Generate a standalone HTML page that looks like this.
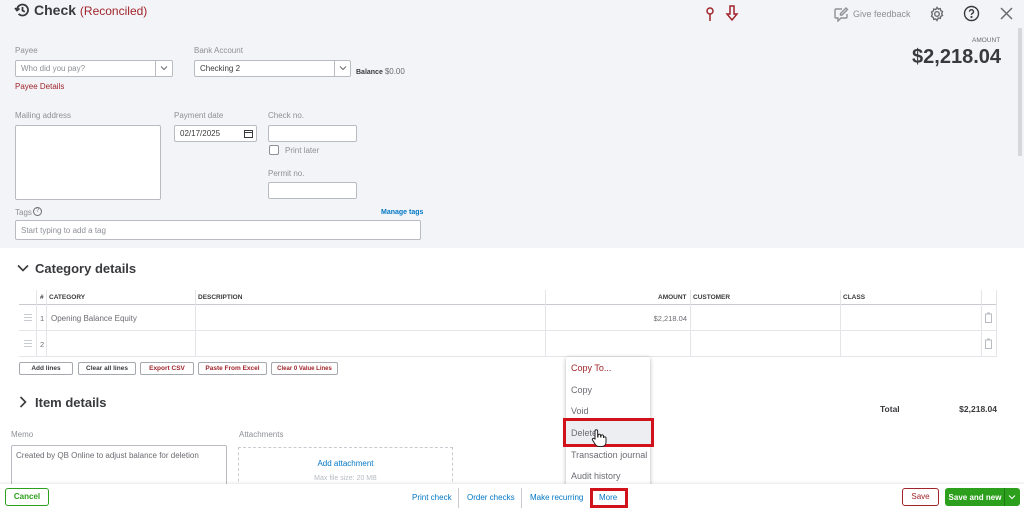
<!DOCTYPE html><html><head><style>
*{box-sizing:border-box;margin:0;padding:0}
body{width:1024px;height:516px;overflow:hidden;font-family:"Liberation Sans",sans-serif;background:#fff;position:relative;color:#393a3d}
.a{position:absolute}
.top{left:0;top:0;width:1024px;height:248px;background:#f3f4f7}
.lbl{font-size:8px;color:#8d9096}
.in{background:#fff;border:1px solid #b8bcc2;border-radius:2px;font-size:8px;color:#8d9096;padding-left:5px;display:flex;align-items:center}
.btn{border:1px solid #a5a8ad;border-radius:2px;font-size:6.5px;font-weight:bold;display:flex;align-items:center;justify-content:center;background:#fff;height:13px;top:362px;white-space:nowrap}
.hd{font-size:6.5px;font-weight:bold;color:#393a3d}
.vl{width:1px;background:#e3e5e8}
.hl{height:1px;background:#e3e5e8}
.mi{font-size:9px;color:#6b6c72;left:571px}
.lk{font-size:8px;color:#0077c5;top:493px}
</style></head><body>
<div class="a top"></div>
<svg class="a" style="left:14px;top:2px" width="16" height="16" viewBox="0 0 16 16" fill="none" stroke="#393a3d" stroke-width="1.8"><path d="M3 8a5.5 5.5 0 1 1 1.6 3.9"/><path d="M1 6l2 2.5 2.5-2"/><path d="M8.5 5v3.5l2.3 1.3"/></svg>
<div class="a" style="left:34px;top:2px;font-size:14px;font-weight:bold">Check <span style="font-weight:normal;color:#a0252b;font-size:12px">(Reconciled)</span></div>
<svg class="a" style="left:703px;top:6px" width="14" height="16" viewBox="0 0 14 16" fill="none" stroke="#a0252b" stroke-width="1.5"><circle cx="7" cy="5" r="3"/><path d="M7 8v7"/></svg>
<svg class="a" style="left:725px;top:5px" width="14" height="17" viewBox="0 0 14 17" fill="none" stroke="#a0252b" stroke-width="1.5"><path d="M5 1h4v8h3l-5 6-5-6h3z"/></svg>
<svg class="a" style="left:833px;top:6px" width="16" height="16" viewBox="0 0 16 16" fill="none" stroke="#8d9096" stroke-width="1.4"><path d="M9 3H3a1 1 0 0 0-1 1v7a1 1 0 0 0 1 1h2v3l3-3h5a1 1 0 0 0 1-1V8"/><path d="M13 2l1.5 1.5L9 9H7.5V7.5z"/></svg>
<div class="a" style="left:853px;top:9px;font-size:9px;color:#8d9096">Give feedback</div>
<svg class="a" style="left:929px;top:6px" width="16" height="16" viewBox="0 0 16 16" fill="none" stroke="#6b6c72" stroke-width="1.4"><circle cx="8" cy="8" r="2.3"/><path d="M8 1.5l1.3 1.6 2-.5.4 2 1.8 1-.8 1.9.8 1.9-1.8 1-.4 2-2-.5L8 14.5l-1.3-1.6-2 .5-.4-2-1.8-1L3.3 8l-.8-1.9 1.8-1 .4-2 2 .5z"/></svg>
<svg class="a" style="left:963px;top:5px" width="17" height="17" viewBox="0 0 17 17" fill="none" stroke="#393a3d" stroke-width="1.4"><circle cx="8.5" cy="8.5" r="7"/><path d="M6.5 6.7a2 2 0 1 1 2.5 1.9c-.5.2-.5.6-.5 1.3"/><circle cx="8.5" cy="12" r=".4" fill="#393a3d"/></svg>
<svg class="a" style="left:1000px;top:7px" width="13" height="13" viewBox="0 0 13 13" stroke="#6b6c72" stroke-width="1.5"><path d="M1 1l11 11M12 1L1 12"/></svg>
<div class="a" style="left:1018px;top:28px;width:4px;height:128px;background:#d4d7dc"></div>
<div class="a" style="left:972px;top:37px;font-size:6.5px;color:#6b6c72">AMOUNT</div>
<div class="a" style="left:880px;top:46px;width:121px;text-align:right;font-size:20px;font-weight:bold">$2,218.04</div>

<div class="a lbl" style="left:15px;top:46px">Payee</div>
<div class="a in" style="left:15px;top:60px;width:158px;height:17px">Who did you pay?</div>
<div class="a" style="left:155px;top:60px;width:1px;height:17px;background:#b8bcc2"></div>
<svg class="a" style="left:160px;top:65px" width="8" height="6" viewBox="0 0 8 6" fill="none" stroke="#6b6c72"><path d="M1 1.5l3 3 3-3"/></svg>
<div class="a" style="left:15px;top:82px;font-size:8px;color:#a0252b">Payee Details</div>
<div class="a lbl" style="left:194px;top:46px">Bank Account</div>
<div class="a in" style="left:194px;top:60px;width:157px;height:17px;color:#393a3d">Checking 2</div>
<div class="a" style="left:334px;top:60px;width:1px;height:17px;background:#b8bcc2"></div>
<svg class="a" style="left:339px;top:65px" width="8" height="6" viewBox="0 0 8 6" fill="none" stroke="#6b6c72"><path d="M1 1.5l3 3 3-3"/></svg>
<div class="a" style="left:356px;top:67px;font-size:7px"><b>Balance</b> <span style="font-size:8px;color:#6b6c72">$0.00</span></div>
<div class="a lbl" style="left:15px;top:111px">Mailing address</div>
<div class="a in" style="left:15px;top:125px;width:146px;height:75px"></div>
<div class="a lbl" style="left:174px;top:111px">Payment date</div>
<div class="a in" style="left:174px;top:125px;width:83px;height:17px;color:#393a3d">02/17/2025</div>
<svg class="a" style="left:244px;top:129px" width="9" height="9" viewBox="0 0 9 9" fill="none" stroke="#393a3d"><rect x=".5" y="1.5" width="8" height="7"/><path d="M.5 3.5h8"/></svg>
<div class="a lbl" style="left:268px;top:111px">Check no.</div>
<div class="a in" style="left:268px;top:125px;width:89px;height:17px"></div>
<div class="a" style="left:269px;top:145px;width:10px;height:10px;border:1px solid #8d9096;border-radius:2px;background:#fff"></div>
<div class="a lbl" style="left:285px;top:146px">Print later</div>
<div class="a lbl" style="left:268px;top:169px">Permit no.</div>
<div class="a in" style="left:268px;top:182px;width:89px;height:17px"></div>
<div class="a lbl" style="left:15px;top:208px">Tags</div>
<div class="a" style="left:33px;top:207px;width:9px;height:9px;border:1px solid #6b6c72;border-radius:50%;font-size:6px;text-align:center;line-height:7px;color:#6b6c72">?</div>
<div class="a" style="left:381px;top:209px;font-size:7px;color:#0077c5;font-weight:bold">Manage tags</div>
<div class="a in" style="left:15px;top:220px;width:406px;height:20px">Start typing to add a tag</div>

<svg class="a" style="left:17px;top:264px" width="12" height="8" viewBox="0 0 12 8" fill="none" stroke="#393a3d" stroke-width="1.6"><path d="M1 1.5l5 5 5-5"/></svg>
<div class="a" style="left:35px;top:261px;font-size:13px;font-weight:bold">Category details</div>
<div class="a hd" style="left:40px;top:294px">#</div>
<div class="a hd" style="left:49px;top:294px">CATEGORY</div>
<div class="a hd" style="left:198px;top:294px">DESCRIPTION</div>
<div class="a hd" style="left:658px;top:294px">AMOUNT</div>
<div class="a hd" style="left:693px;top:294px">CUSTOMER</div>
<div class="a hd" style="left:843px;top:294px">CLASS</div>
<div class="a hl" style="left:19px;top:304px;width:978px;background:#c8cbd0"></div>
<div class="a hl" style="left:19px;top:330px;width:978px"></div>
<div class="a hl" style="left:19px;top:356px;width:978px"></div>
<div class="a vl" style="left:36px;top:290px;height:66px"></div>
<div class="a vl" style="left:46px;top:290px;height:66px"></div>
<div class="a vl" style="left:195px;top:290px;height:66px"></div>
<div class="a vl" style="left:545px;top:290px;height:66px"></div>
<div class="a vl" style="left:690px;top:290px;height:66px"></div>
<div class="a vl" style="left:840px;top:290px;height:66px"></div>
<div class="a vl" style="left:981px;top:290px;height:66px"></div>
<div class="a vl" style="left:996px;top:290px;height:66px"></div>
<svg class="a" style="left:24px;top:314px" width="8" height="7" viewBox="0 0 8 7" fill="#c8cbd0"><rect x="0" y="0" width="8" height="1"/><rect x="0" y="3" width="8" height="1"/><rect x="0" y="6" width="8" height="1"/></svg>
<svg class="a" style="left:24px;top:340px" width="8" height="7" viewBox="0 0 8 7" fill="#c8cbd0"><rect x="0" y="0" width="8" height="1"/><rect x="0" y="3" width="8" height="1"/><rect x="0" y="6" width="8" height="1"/></svg>
<div class="a" style="left:40px;top:314px;font-size:7.5px;color:#6b6c72">1</div>
<div class="a" style="left:40px;top:340px;font-size:7.5px;color:#6b6c72">2</div>
<div class="a" style="left:51px;top:314px;font-size:8px;color:#6b6c72">Opening Balance Equity</div>
<div class="a" style="left:600px;top:314px;width:87px;text-align:right;font-size:7.5px;color:#6b6c72">$2,218.04</div>
<svg class="a" style="left:984px;top:312px" width="9" height="11" viewBox="0 0 9 11" fill="none" stroke="#b8bcc2"><path d="M1 2h7M3 1h3M1.5 2.5v8h6v-8"/></svg>
<svg class="a" style="left:984px;top:338px" width="9" height="11" viewBox="0 0 9 11" fill="none" stroke="#b8bcc2"><path d="M1 2h7M3 1h3M1.5 2.5v8h6v-8"/></svg>
<div class="a btn" style="left:19px;width:54px;color:#393a3d">Add lines</div>
<div class="a btn" style="left:78px;width:58px;color:#393a3d">Clear all lines</div>
<div class="a btn" style="left:140px;width:54px;color:#a0252b">Export CSV</div>
<div class="a btn" style="left:198px;width:69px;color:#a0252b">Paste From Excel</div>
<div class="a btn" style="left:271px;width:67px;color:#a0252b;font-size:6px">Clear 0 Value Lines</div>
<svg class="a" style="left:19px;top:396px" width="8" height="12" viewBox="0 0 8 12" fill="none" stroke="#393a3d" stroke-width="1.6"><path d="M1.5 1l5 5-5 5"/></svg>
<div class="a" style="left:35px;top:395px;font-size:13px;font-weight:bold">Item details</div>
<div class="a" style="left:880px;top:404px;font-size:8.5px;font-weight:bold">Total</div>
<div class="a" style="left:930px;top:404px;width:67px;text-align:right;font-size:8.5px;font-weight:bold">$2,218.04</div>
<div class="a lbl" style="left:11px;top:430px">Memo</div>
<div class="a" style="left:11px;top:445px;width:216px;height:45px;border:1px solid #b8bcc2;border-radius:2px;font-size:8px;color:#6b6c72;padding:5px 4px">Created by QB Online to adjust balance for deletion</div>
<div class="a lbl" style="left:239px;top:430px">Attachments</div>
<div class="a" style="left:238px;top:447px;width:215px;height:45px;border:1px dashed #c8cbd0"></div>
<div class="a" style="left:238px;top:459px;width:215px;text-align:center;font-size:8px;color:#0077c5">Add attachment</div>
<div class="a" style="left:238px;top:475px;width:215px;text-align:center;font-size:7px;color:#b8bcc2">Max file size: 20 MB</div>

<div class="a" style="left:566px;top:357px;width:84px;height:131px;background:#fff;box-shadow:0 1px 4px rgba(0,0,0,.3);border-radius:2px"></div>
<div class="a mi" style="top:363px;color:#a0252b">Copy To...</div>
<div class="a mi" style="top:385px">Copy</div>
<div class="a mi" style="top:406px">Void</div>
<div class="a" style="left:563px;top:418px;width:91px;height:29px;background:#eceef1;border:3px solid #d0121b"></div>
<div class="a mi" style="top:428px">Delete</div>
<div class="a mi" style="top:450px">Transaction journal</div>
<div class="a mi" style="top:471px">Audit history</div>
<svg class="a" style="left:590px;top:428px" width="18" height="20" viewBox="0 0 18 20" fill="#fff" stroke="#222" stroke-width="1"><path d="M5 11V3a1.3 1.3 0 0 1 2.6 0v6h.4V7.5a1.3 1.3 0 0 1 2.6 0V9h.3V8.2a1.3 1.3 0 0 1 2.6 0V9.5h.2a1.2 1.2 0 0 1 2.3.5v4c0 2.5-1.5 4.5-4.5 4.5H9c-2 0-3-1-4-2.5L2.5 12a1.2 1.2 0 0 1 2-1.3z"/></svg>

<div class="a" style="left:0;top:484px;width:1024px;height:32px;background:#fff;box-shadow:0 -1px 3px rgba(0,0,0,.1)"></div>
<div class="a" style="left:5px;top:488px;width:44px;height:18px;border:1.5px solid #2ca01c;border-radius:3px;font-size:8px;font-weight:bold;color:#2ca01c;text-align:center;line-height:15px">Cancel</div>
<div class="a lk" style="left:412px">Print check</div>
<div class="a" style="left:458px;top:488px;width:1px;height:20px;background:#c8cbd0"></div>
<div class="a lk" style="left:467px">Order checks</div>
<div class="a" style="left:521px;top:488px;width:1px;height:20px;background:#c8cbd0"></div>
<div class="a lk" style="left:530px">Make recurring</div>
<div class="a" style="left:590px;top:488px;width:38px;height:20px;border:3px solid #d0121b"></div>
<div class="a lk" style="left:599px">More</div>
<div class="a" style="left:902px;top:488px;width:37px;height:18px;border:1px solid #a0252b;border-radius:3px;font-size:8px;color:#a0252b;text-align:center;line-height:16px">Save</div>
<div class="a" style="left:945px;top:488px;width:75px;height:18px;background:#2ca01c;border-radius:3px"></div>
<div class="a" style="left:945px;top:493px;width:60px;text-align:center;font-size:8px;font-weight:bold;color:#fff">Save and new</div>
<div class="a" style="left:1004px;top:488px;width:1px;height:18px;background:#1f7a12"></div>
<svg class="a" style="left:1008px;top:494px" width="8" height="6" viewBox="0 0 8 6" fill="none" stroke="#fff"><path d="M1 1.5l3 3 3-3"/></svg>
</body></html>
